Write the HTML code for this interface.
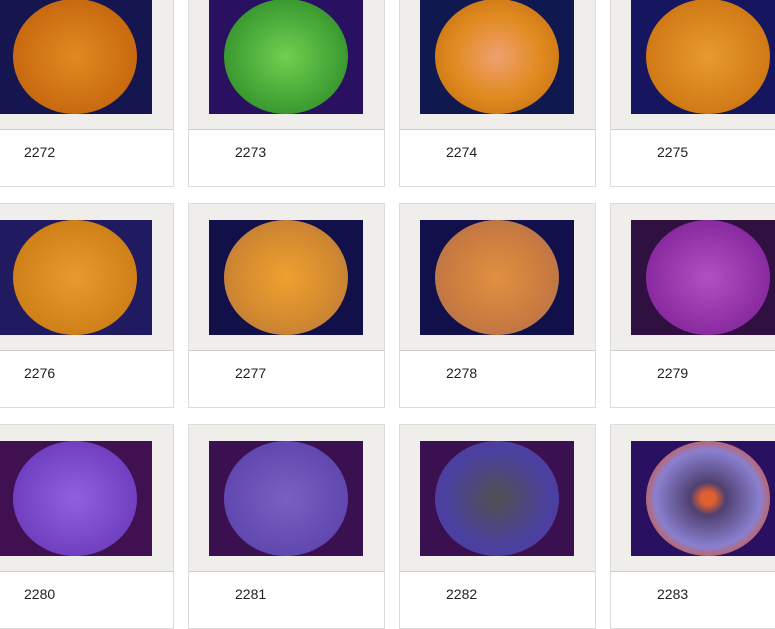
<!DOCTYPE html>
<html><head><style>
body{margin:0;width:775px;height:610px;overflow:hidden;background:#fff;font-family:"Liberation Sans",sans-serif;position:relative}
.c{position:absolute;width:197px;height:205px;border:1px solid #dcdcdc;background:#fff;box-sizing:border-box}
.f{position:absolute;left:0;top:0;width:195px;height:146px;background:#efeeea;border-bottom:1px solid #cfcfcf}
.i{position:absolute;left:20px;top:16px;width:154px;height:115px;background:#101030;overflow:hidden}
.i::after{content:"";position:absolute;left:10%;top:0;width:80%;height:100%;border-radius:50%;background:var(--k)}
.t{position:absolute;left:46px;top:161px;font-size:14px;color:#222}
</style></head><body>
<div class="c" style="left:-23px;top:-18px"><div class="f"><div class="i" style="background:#151550;--k:radial-gradient(#e08a20,#c86a10 70%,#8a4a10)"></div></div><div class="t">2272</div></div>
<div class="c" style="left:188px;top:-18px"><div class="f"><div class="i" style="background:#2a1060;--k:radial-gradient(#70d050,#3a9a30 70%,#2a6a30)"></div></div><div class="t">2273</div></div>
<div class="c" style="left:399px;top:-18px"><div class="f"><div class="i" style="background:#101850;--k:radial-gradient(#f0a070,#e08a20 50%,#c06a10)"></div></div><div class="t">2274</div></div>
<div class="c" style="left:610px;top:-18px"><div class="f"><div class="i" style="background:#151560;--k:radial-gradient(#e89a30,#d07a15 70%,#9a5010)"></div></div><div class="t">2275</div></div>
<div class="c" style="left:-23px;top:203px"><div class="f"><div class="i" style="background:#201a60;--k:radial-gradient(#e89a30,#d08018 70%,#a06010)"></div></div><div class="t">2276</div></div>
<div class="c" style="left:188px;top:203px"><div class="f"><div class="i" style="background:#121048;--k:radial-gradient(#f0a030,#d08830 60%,#b07050)"></div></div><div class="t">2277</div></div>
<div class="c" style="left:399px;top:203px"><div class="f"><div class="i" style="background:#12104a;--k:radial-gradient(#e09040,#c87a40 60%,#a07060)"></div></div><div class="t">2278</div></div>
<div class="c" style="left:610px;top:203px"><div class="f"><div class="i" style="background:#301040;--k:radial-gradient(#b050c0,#8a2aa0 70%,#c060b0)"></div></div><div class="t">2279</div></div>
<div class="c" style="left:-23px;top:424px"><div class="f"><div class="i" style="background:#401050;--k:radial-gradient(#9060e0,#7040c0 70%,#8050c0)"></div></div><div class="t">2280</div></div>
<div class="c" style="left:188px;top:424px"><div class="f"><div class="i" style="background:#3a1050;--k:radial-gradient(#7a60c0,#6048b0 70%,#7a5ab0)"></div></div><div class="t">2281</div></div>
<div class="c" style="left:399px;top:424px"><div class="f"><div class="i" style="background:#3a1050;--k:radial-gradient(#505050,#4a40a0 60%,#5a3aa0)"></div></div><div class="t">2282</div></div>
<div class="c" style="left:610px;top:424px"><div class="f"><div class="i" style="background:#2a1060;--k:radial-gradient(#e06030 8%,#504070 20%,#8a80d0 60%,#e05020 80%)"></div></div><div class="t">2283</div></div>
</body></html>
